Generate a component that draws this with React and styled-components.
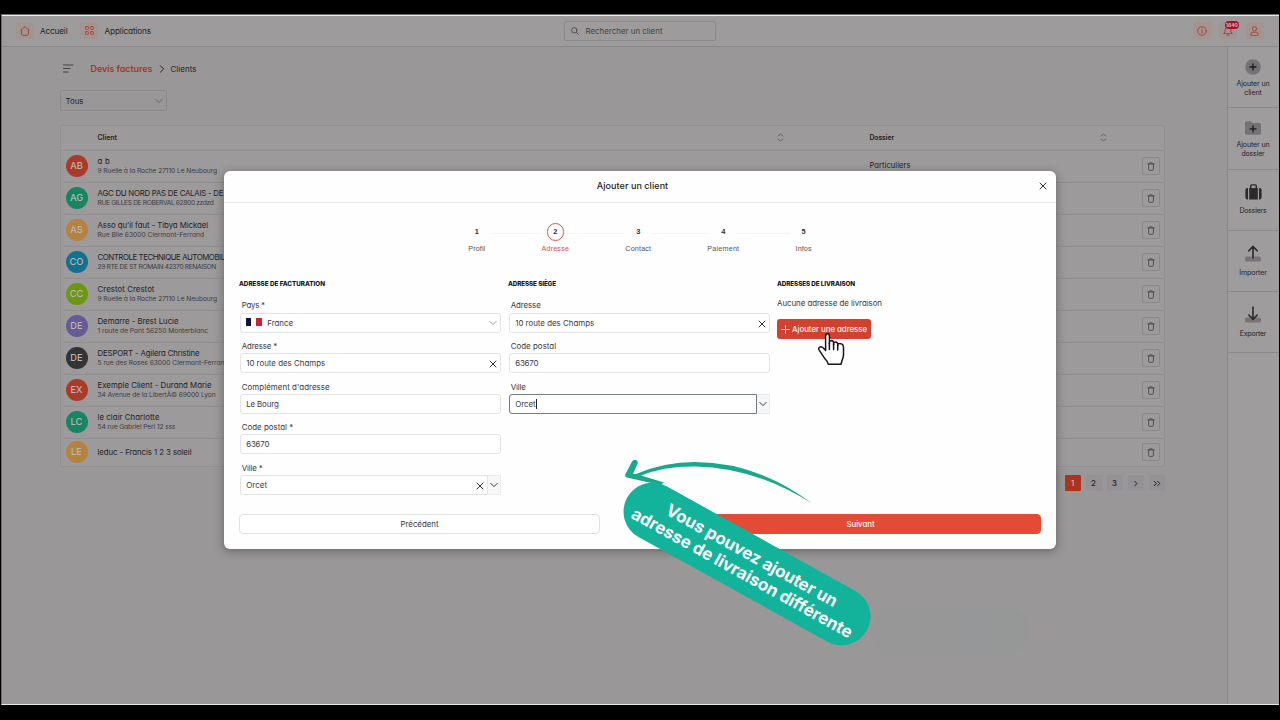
import { useLayoutEffect, useRef } from "react"
import styled, { createGlobalStyle } from "styled-components"

const clients = [
    { initials: "AB", color: "#ac3a28", name: "a b", nameW: 12.5, address: "9 Ruelle à la Roche 27110 Le Neubourg", addressW: 119.5, folder: "Particuliers" },
    { initials: "AG", color: "#168563", name: "AGC DU NORD PAS DE CALAIS - DE CALAIS", nameW: 154, address: "RUE GILLES DE ROBERVAL 62800 zzdzd", addressW: 116 },
    { initials: "AS", color: "#b6823f", name: "Asso qu'il faut - Tibya Mickael", nameW: 110.5, address: "Rue Blie 63000 Clermont-Ferrand", addressW: 106.5 },
    { initials: "CO", color: "#12718c", name: "CONTROLE TECHNIQUE AUTOMOBILE", nameW: 131.5, address: "29 RTE DE ST ROMAIN 42370 RENAISON", addressW: 118.5 },
    { initials: "CC", color: "#6b9712", name: "Crestot Crestot", nameW: 57, address: "9 Ruelle à la Roche 27110 Le Neubourg", addressW: 119.5 },
    { initials: "DE", color: "#665a97", name: "Demarre - Brest Lucie", nameW: 81, address: "1 route de Pont 56250 Monterblanc", addressW: 110.5 },
    { initials: "DE", color: "#343335", name: "DESPORT - Agilera Christine", nameW: 102, address: "5 rue des Roses 63000 Clermont-Ferrand", addressW: 131 },
    { initials: "EX", color: "#ac3a28", name: "Exemple Client - Durand Marie", nameW: 114, address: "34 Avenue de la LibertÃ© 69000 Lyon", addressW: 118 },
    { initials: "LC", color: "#168563", name: "le clair Charlotte", nameW: 62, address: "54 rue Gabriel Peri 12 sss", addressW: 78 },
    { initials: "LE", color: "#b6823f", name: "leduc - Francis 1 2 3 soleil", nameW: 94 },
]

const steps = [
    { label: "Profil", width: 17, cell: 78.5 },
    { label: "Adresse", width: 27.5, cell: 83, active: true },
    { label: "Contact", width: 26, cell: 85 },
    { label: "Paiement", width: 32, cell: 80.3 },
    { label: "Infos", width: 16, cell: 0 },
]

// Spreads the letters so that the text takes exactly w pixels
const Fit = ({ w, children, ...rest }) => {
    const ref = useRef(null)

    useLayoutEffect(() => {
        const el = ref.current
        el.style.letterSpacing = "0px"
        const natural = el.getBoundingClientRect().width
        el.style.letterSpacing = `${(w - natural) / children.length}px`
    }, [w, children])

    return <Text ref={ref} {...rest}>{children}</Text>
}

// Same, measured before the banner's rotation
const BannerLine = ({ w, children }) => {
    const ref = useRef(null)

    useLayoutEffect(() => {
        const el = ref.current
        el.style.letterSpacing = "0px"
        el.style.letterSpacing = `${(w - el.offsetWidth) / children.length}px`
    }, [w, children])

    return <BannerText ref={ref}>{children}</BannerText>
}

const Chevron = ({ size = 8, color = "#8a888a", dir = "down" }) => {
    const d = { down: "M1 3 L5 7 L9 3", right: "M3 1 L7 5 L3 9" }[dir]
    return (
        <Icon width={size} height={size} viewBox="0 0 10 10" stroke={color} strokeWidth="1.2">
            <path d={d} />
        </Icon>
    )
}

const Cross = () => (
    <Icon width="8" height="8" viewBox="0 0 8 8" stroke="#333" strokeWidth="1">
        <path d="M1 1 L7 7 M7 1 L1 7" />
    </Icon>
)

const Sort = () => (
    <Icon width="7" height="9" viewBox="0 0 7 9" stroke="#5a585a" strokeWidth=".8">
        <path d="M1 3 L3.5 1 L6 3 M1 6 L3.5 8 L6 6" />
    </Icon>
)

const Trash = () => (
    <Icon width="8" height="9" viewBox="0 0 8 9" stroke="#434143" strokeWidth=".8">
        <path d="M.9 1.9 H7.1 M2.8 1.7 V.9 H5.2 V1.7 M1.6 2 V7.3 Q1.6 8.4 2.7 8.4 H5.3 Q6.4 8.4 6.4 7.3 V2" />
    </Icon>
)

const TopBar = () => (
    <Header>
        <NavItem>
            <Tile>
                <Icon width="10" height="10" viewBox="0 0 10 10" stroke="#a9412f" strokeWidth=".9">
                    <path d="M.7 4.3 L5 .7 L9.3 4.3 M1.6 3.8 V8.2 Q1.6 9.3 2.6 9.3 H7.4 Q8.4 9.3 8.4 8.2 V3.8" />
                </Icon>
            </Tile>
            <Fit w={27.5} $size="8.2px">Accueil</Fit>
        </NavItem>
        <NavItem>
            <Tile>
                <Icon width="9" height="9" viewBox="0 0 9 9" stroke="#a9412f" strokeWidth=".9">
                    <rect x=".6" y=".6" width="2.8" height="2.8" rx=".6" />
                    <rect x="5.6" y=".6" width="2.8" height="2.8" rx=".6" />
                    <rect x=".6" y="5.6" width="2.8" height="2.8" rx=".6" />
                    <rect x="5.6" y="5.6" width="2.8" height="2.8" rx=".6" />
                </Icon>
            </Tile>
            <Fit w={46.5} $size="8.2px">Applications</Fit>
        </NavItem>
        <Search>
            <Icon width="8" height="8" viewBox="0 0 8 8" stroke="#434143" strokeWidth=".8">
                <circle cx="3.3" cy="3.3" r="2.7" />
                <path d="M5.4 5.4 L7.4 7.4" />
            </Icon>
            <Fit w={77} $size="7.9px" $color="#454345">Rechercher un client</Fit>
        </Search>
        <HeaderIcons>
            <Tile>
                <Icon width="10" height="10" viewBox="0 0 10 10" stroke="#a9412f" strokeWidth=".9">
                    <circle cx="5" cy="5" r="4.3" />
                    <path d="M5 4.6 V7.2 M5 2.8 V3.1" />
                </Icon>
            </Tile>
            <Tile>
                <Icon width="10" height="10" viewBox="0 0 10 10" stroke="#a9412f" strokeWidth=".9">
                    <path d="M.8 7.5 H9.2 L8 5.9 V4 Q8 1 5 1 Q2 1 2 4 V5.9 Z M3.7 9.2 H6.3" />
                </Icon>
                <Badge>1640</Badge>
            </Tile>
            <Tile>
                <Icon width="9" height="10" viewBox="0 0 9 10" stroke="#a9412f" strokeWidth=".9">
                    <circle cx="4.5" cy="2.8" r="2.1" />
                    <path d="M.9 9.3 V8.2 Q.9 6.2 2.9 6.2 H6.1 Q8.1 6.2 8.1 8.2 V9.3 Z" />
                </Icon>
            </Tile>
        </HeaderIcons>
    </Header>
)

const SidePanel = () => (
    <Aside>
        <Action>
            <Icon width="16" height="16" viewBox="0 0 16 16">
                <circle cx="8" cy="8" r="7.8" fill="#747274" />
                <path d="M8 5 V11 M5 8 H11" stroke="#1b1a1c" strokeWidth="1.3" />
            </Icon>
            <Fit w={33} $size="7px" $line="9.4px">Ajouter un</Fit>
            <Fit w={17.5} $size="7px" $line="9.4px">client</Fit>
        </Action>
        <Action>
            <Icon width="16" height="16" viewBox="0 0 16 16">
                <path d="M0 3 Q0 1.2 1.6 1.2 H5.6 L7.4 3 H14.4 Q16 3 16 4.6 V13 Q16 14.8 14.4 14.8 H1.6 Q0 14.8 0 13 Z" fill="#747274" />
                <path d="M8 5.8 V11.8 M5 8.8 H11" stroke="#1b1a1c" strokeWidth="1.3" />
            </Icon>
            <Fit w={33} $size="7px" $line="9.4px">Ajouter un</Fit>
            <Fit w={23} $size="7px" $line="9.4px">dossier</Fit>
        </Action>
        <Action>
            <Icon width="17" height="16" viewBox="0 0 17 16">
                <path d="M2.6 4 H3 V15.4 H2.6 Q.4 15.4 .4 13.4 V6 Q.4 4 2.6 4 Z M14 4 H14.4 Q16.6 4 16.6 6 V13.4 Q16.6 15.4 14.4 15.4 H14 Z M4.2 4 H12.8 V15.4 H4.2 Z" fill="#2b2a2c" />
                <path d="M5.7 4 V2 Q5.7 .9 6.8 .9 H10.2 Q11.3 .9 11.3 2 V4" stroke="#2b2a2c" strokeWidth="1.4" />
            </Icon>
            <Fit w={27} $size="7px" $line="13px">Dossiers</Fit>
        </Action>
        <Action>
            <Icon width="16" height="17" viewBox="0 0 16 17">
                <rect x="0" y="11.5" width="16" height="5" rx="1.5" fill="#777577" />
                <path d="M8 13 V2 M3.8 5.8 L8 1.4 L12.2 5.8" stroke="#2b2a2c" strokeWidth="1.6" />
            </Icon>
            <Fit w={27.5} $size="7px" $line="13px">Importer</Fit>
        </Action>
        <Action>
            <Icon width="16" height="17" viewBox="0 0 16 17">
                <rect x="0" y="11.5" width="16" height="5" rx="1.5" fill="#777577" />
                <path d="M8 1 V13 M3.8 9 L8 13.4 L12.2 9" stroke="#2b2a2c" strokeWidth="1.6" />
            </Icon>
            <Fit w={26.5} $size="7px" $line="13px">Exporter</Fit>
        </Action>
    </Aside>
)

const ClientTable = () => (
    <Table>
        <HeadRow>
            <span />
            <Fit w={19.5} $size="6.9px" $weight="600">Client</Fit>
            <Sort />
            <Fit w={24.5} $size="6.9px" $weight="600">Dossier</Fit>
            <Sort />
        </HeadRow>
        {clients.map((c) => (
            <Row key={c.initials + c.name} $last={!c.address}>
                <Avatar $color={c.color}>{c.initials}</Avatar>
                <ClientInfo>
                    <Fit w={c.nameW} $size="7.8px" $line="11px">{c.name}</Fit>
                    {c.address && <Fit w={c.addressW} $size="6.7px" $line="9.5px" $color="#3f3d40">{c.address}</Fit>}
                </ClientInfo>
                <Folder>{c.folder && <Fit w={41} $size="7.6px">{c.folder}</Fit>}</Folder>
                <IconButton><Trash /></IconButton>
            </Row>
        ))}
    </Table>
)

const Field = ({ label, labelW, children }) => (
    <FieldBox>
        <FieldLabel><Fit w={labelW} $size="7.9px" $color="#39383a">{label}</Fit></FieldLabel>
        {children}
    </FieldBox>
)

const ClientModal = () => (
    <Modal>
        <ModalHeader>
            <span />
            <Fit w={71.5} $size="9px" $color="#222" $weight="500">Ajouter un client</Fit>
            <Close><Cross /></Close>
        </ModalHeader>
        <Stepper>
            {steps.map((s, i) => (
                <Step key={s.label} $cell={s.cell}>
                    <StepNumber $active={s.active}>{i + 1}</StepNumber>
                    <Fit w={s.width} $size="7.2px" $line="10px" $font="'Liberation Sans', Arial, sans-serif" $color={s.active ? "#e0503f" : "#555"}>{s.label}</Fit>
                </Step>
            ))}
        </Stepper>
        <Columns>
            <div>
                <ColumnTitle><Fit w={86} $size="6.3px" $weight="800" $color="#151515">ADRESSE DE FACTURATION</Fit></ColumnTitle>
                <Field label="Pays *" labelW={23}>
                    <Input>
                        <Flag />
                        <Grow><Fit w={26} $size="7.9px" $color="#3b3a3c">France</Fit></Grow>
                        <Chevron color="#999" />
                    </Input>
                </Field>
                <Field label="Adresse *" labelW={35.5}>
                    <Input>
                        <Grow><Fit w={79} $size="7.9px" $color="#3b3a3c">10 route des Champs</Fit></Grow>
                        <Lowered><Cross /></Lowered>
                    </Input>
                </Field>
                <Field label="Complément d'adresse" labelW={88}>
                    <Input><Fit w={32.5} $size="7.9px" $color="#3b3a3c">Le Bourg</Fit></Input>
                </Field>
                <Field label="Code postal *" labelW={51.5}>
                    <Input><Fit w={23} $size="7.9px" $color="#3b3a3c">63670</Fit></Input>
                </Field>
                <Field label="Ville *" labelW={21}>
                    <Split>
                        <Input $joined>
                            <Grow><Fit w={21} $size="7.9px" $color="#3b3a3c">Orcet</Fit></Grow>
                            <Lowered><Cross /></Lowered>
                        </Input>
                        <Toggle><Chevron color="#333" /></Toggle>
                    </Split>
                </Field>
            </div>
            <div>
                <ColumnTitle><Fit w={48} $size="6.3px" $weight="800" $color="#151515">ADRESSE SIÈGE</Fit></ColumnTitle>
                <Field label="Adresse" labelW={30}>
                    <Input>
                        <Grow><Fit w={79} $size="7.9px" $color="#3b3a3c">10 route des Champs</Fit></Grow>
                        <Lowered><Cross /></Lowered>
                    </Input>
                </Field>
                <Field label="Code postal" labelW={45.5}>
                    <Input><Fit w={23} $size="7.9px" $color="#3b3a3c">63670</Fit></Input>
                </Field>
                <Field label="Ville" labelW={15}>
                    <Split>
                        <Input $joined $focused>
                            <Fit w={20.5} $size="7.9px" $color="#3b3a3c">Orcet</Fit>
                            <Caret />
                        </Input>
                        <Toggle><Chevron color="#333" /></Toggle>
                    </Split>
                </Field>
            </div>
            <div>
                <ColumnTitle><Fit w={78} $size="6.3px" $weight="800" $color="#151515">ADRESSES DE LIVRAISON</Fit></ColumnTitle>
                <Empty><Fit w={105} $size="7.9px" $color="#39383a">Aucune adresse de livraison</Fit></Empty>
                <AddButton>
                    <Icon width="9" height="9" viewBox="0 0 9 9" stroke="#fbe9e6" strokeWidth="1">
                        <path d="M4.5 .7 V8.3 M.7 4.5 H8.3" />
                    </Icon>
                    <Fit w={75} $size="7.9px" $weight="500" $color="#fdeeeb">Ajouter une adresse</Fit>
                </AddButton>
            </div>
        </Columns>
        <Footer>
            <WideButton><Fit w={38} $size="7.9px" $color="#39383a">Précédent</Fit></WideButton>
            <WideButton $primary><Fit w={28} $size="7.9px" $weight="500" $color="#fff3f0">Suivant</Fit></WideButton>
        </Footer>
    </Modal>
)

const HandCursor = () => (
    <Cursor width="30" height="36" viewBox="0 0 30 36">
        <path
            d="M9.6 16.5 V4.5 Q9.6 1.8 11.5 1.8 Q13.4 1.8 13.4 4.5 V12 V10.3 Q13.8 8.6 15.5 8.6 Q17.6 8.8 17.6 11 V13 V11.5 Q18 9.8 19.6 9.9 Q21.7 10.1 21.7 12.3 V14 V13 Q22.1 11.4 23.6 11.6 Q27.5 11.8 27.5 15.5 V23 Q27.4 25.5 26.2 28 L25 32.2 H12.2 Q11.6 29.5 8.8 26.6 L3.2 18.2 Q1.8 15.8 4.2 14.9 Q6.2 14.4 9.6 18.6 Z"
            fill="#fff"
            stroke="#16161c"
            strokeWidth="1.5"
            strokeLinejoin="round"
        />
        <path d="M13.4 11 V17.5 M17.6 12 V17.5 M21.7 13 V18" stroke="#16161c" strokeWidth="1.5" fill="none" strokeLinecap="round" />
    </Cursor>
)

const Arrow = () => (
    <ArrowSvg width="200" height="50" viewBox="620 456 200 50">
        <path d="M636 474 Q664 462 695 462 Q757 462.2 812 503.4 Q755 467.4 695 466.4 Q664 466 641 475.6 L664 482.5 L660 485 L627 477.6 Q624.4 476.6 625.4 474.2 L632 461.6 Q633.8 459 636.6 460.2 Q638.6 461.4 637.4 464 L633 474 Z" fill="#16a98b" />
    </ArrowSvg>
)

export default function App() {
    return (
        <>
            <GlobalStyle />
            <Screen>
                <Shell>
                    <TopBar />
                    <Body>
                        <Content>
                            <Breadcrumb>
                                <Icon width="11" height="9" viewBox="0 0 11 9" stroke="#39383a" strokeWidth=".9">
                                    <path d="M.5 1 H10 M.5 4.5 H7.2 M.5 8 H5.2" />
                                </Icon>
                                <Fit w={62} $size="9px" $weight="600" $color="#a5371f">Devis factures</Fit>
                                <Chevron dir="right" color="#1f1e20" />
                                <Fit w={26} $size="7.9px">Clients</Fit>
                            </Breadcrumb>
                            <Filter>
                                <Fit w={18} $size="8px">Tous</Fit>
                                <Chevron color="#656365" />
                            </Filter>
                            <ClientTable />
                            <Pager>
                                <Page>‹</Page>
                                <Page $active>1</Page>
                                <Page>2</Page>
                                <Page>3</Page>
                                <Page>
                                    <Icon width="4" height="7" viewBox="0 0 4 7" stroke="#222" strokeWidth="1"><path d="M.8 1.3 L3 3.5 L.8 5.7" /></Icon>
                                </Page>
                                <Page>
                                    <Icon width="8" height="7" viewBox="0 0 8 7" stroke="#222" strokeWidth="1"><path d="M1.2 1.3 L3.4 3.5 L1.2 5.7 M4.6 1.3 L6.8 3.5 L4.6 5.7" /></Icon>
                                </Page>
                            </Pager>
                        </Content>
                        <SidePanel />
                    </Body>
                </Shell>
                <ClientModal />
                <Ghost />
                <Arrow />
                <Banner>
                    <BannerLine w={193}>Vous pouvez ajouter un</BannerLine>
                    <BannerLine w={250}>adresse de livraison différente</BannerLine>
                </Banner>
                <HandCursor />
            </Screen>
        </>
    )
}

const GlobalStyle = createGlobalStyle`
    * {
        box-sizing: border-box;
    }
    body {
        margin: 0;
        background: #000;
        overflow: hidden;
        font-family: Inter, "Open Sans", sans-serif;
        font-feature-settings: "cv11";
        color: #242325;
    }
`

const Text = styled.span`
    display: inline-block;
    white-space: nowrap;
    flex: none;
    font-family: ${(p) => p.$font || "inherit"};
    font-size: ${(p) => p.$size};
    font-weight: ${(p) => p.$weight || 400};
    line-height: ${(p) => p.$line || "12px"};
    color: ${(p) => p.$color || "#242325"};
`

const Icon = styled.svg`
    display: block;
    flex: none;
    fill: none;
    stroke-linecap: round;
    stroke-linejoin: round;
`

const Screen = styled.div`
    position: relative;
    width: 1280px;
    height: 720px;
    padding: 14px 1.5px 15px 1px;
`

const Shell = styled.div`
    height: 691px;
    display: flex;
    flex-direction: column;
    background: #999798;
    border-left: 1px solid #6b696b;
    border-top: 1px solid #6d6b6d;
    border-bottom: 1px solid #e8e8e8;
`

const Header = styled.header`
    height: 32px;
    flex: none;
    display: flex;
    align-items: center;
    padding: 0 15px 1px 13.5px;
    border-top: 1px solid #ececec;
    border-bottom: 1px solid #8a888a;
    background: #9d9b9c;
`

const NavItem = styled.div`
    display: flex;
    align-items: center;
    gap: 6.5px;
    margin-right: 12.5px;
`

const Tile = styled.div`
    position: relative;
    width: 18px;
    height: 17px;
    border-radius: 3px;
    background: #a29491;
    display: flex;
    justify-content: center;
    align-items: center;
`

const Badge = styled.div`
    position: absolute;
    left: 5.5px;
    top: -1px;
    width: 14px;
    height: 8px;
    border-radius: 4px;
    background: #a31327;
    color: #d8b9bd;
    font-size: 5px;
    font-weight: 700;
    line-height: 8px;
    text-align: center;
`

const Search = styled.div`
    width: 152px;
    height: 20px;
    margin-left: 400px;
    padding: 0 6.5px;
    display: flex;
    align-items: center;
    gap: 6.5px;
    border: 1px solid #8b898b;
    border-radius: 2px;
`

const HeaderIcons = styled.div`
    margin-left: auto;
    display: flex;
    gap: 8.2px;
`

const Body = styled.div`
    flex: 1;
    display: flex;
`

const Content = styled.main`
    width: 1163px;
    padding: 13.5px 0 0 58px;
`

const Breadcrumb = styled.nav`
    height: 16px;
    display: flex;
    align-items: center;
    padding-left: 3px;

    svg:first-child {
        margin-right: 16.5px;
    }
    svg:not(:first-child) {
        margin: 0 5px;
    }
`

const Filter = styled.div`
    width: 107px;
    height: 21px;
    margin-top: 13.5px;
    padding: 0 3px 0 4.5px;
    display: flex;
    align-items: center;
    justify-content: space-between;
    border: 1px solid #8b898b;
    border-radius: 2px;
`

const Table = styled.section`
    width: 1105px;
    margin-top: 14px;
    border: 1px solid #929092;
    border-radius: 3px;
    background: #9c9a9b;
`

const HeadRow = styled.div`
    height: 24.5px;
    display: grid;
    grid-template-columns: 36.5px 679px 93px 230.5px auto;
    align-items: center;
    justify-items: start;
    border-bottom: 1px solid #919091;
`

const Row = styled.div`
    height: ${(p) => (p.$last ? "27px" : "32px")};
    margin-left: 3px;
    padding: 0 4px 0 1.5px;
    display: grid;
    grid-template-columns: 32px 772px 1fr 18px;
    align-items: center;
    border-bottom: ${(p) => (p.$last ? "none" : "1px solid #919091")};
`

const Avatar = styled.div`
    width: 22px;
    height: 22px;
    border-radius: 50%;
    background: ${(p) => p.$color};
    color: #bab6b6;
    font-size: 9.3px;
    font-weight: 500;
    line-height: 22px;
    text-align: center;
`

const ClientInfo = styled.div`
    display: flex;
    flex-direction: column;
    align-items: flex-start;
`

const Folder = styled.div`
    display: flex;
`

const IconButton = styled.div`
    width: 18px;
    height: 18px;
    display: flex;
    justify-content: center;
    align-items: center;
    border: 1px solid #8a888a;
    border-radius: 2px;
`

const Pager = styled.div`
    display: flex;
    justify-content: flex-end;
    gap: 5px;
    padding: 8.5px 0.5px 0 0;
`

const Page = styled.div`
    width: 16px;
    height: 16px;
    display: flex;
    justify-content: center;
    align-items: center;
    border-radius: 1px;
    font-size: 7.8px;
    font-weight: 500;
    background: ${(p) => (p.$active ? "#ac341d" : "#949294")};
    color: ${(p) => (p.$active ? "#d0c4c2" : "#222")};
`

const Aside = styled.aside`
    width: 52px;
    margin-left: auto;
    border-left: 1px solid #8a888a;
    background: #9e9c9d;
`

const Action = styled.div`
    height: 61.3px;
    display: flex;
    flex-direction: column;
    align-items: center;
    justify-content: center;
    padding-top: 2px;
    border-bottom: 1px solid #8a888a;

    svg {
        margin-bottom: 4px;
    }
`

const Modal = styled.div`
    position: absolute;
    left: 224px;
    top: 170.5px;
    width: 832px;
    height: 378px;
    border-radius: 6px;
    background: #fefefe;
    box-shadow: 0 2px 10px rgba(40, 38, 40, 0.45);
`

const ModalHeader = styled.div`
    height: 32px;
    display: grid;
    grid-template-columns: 25px 1fr 40px;
    align-items: center;
    justify-items: center;
    padding-bottom: 1px;
    border-bottom: 1px solid #e6e6e6;
`

const Close = styled.div`
    padding-left: 13px;
`

const Stepper = styled.div`
    width: 327px;
    margin: 20.7px 0 0 252.8px;
    display: flex;
`

const Step = styled.div`
    position: relative;
    width: 0;
    margin-right: ${(p) => p.$cell}px;
    display: flex;
    flex-direction: column;
    align-items: center;
    gap: 3.5px;

    &:not(:last-child)::after {
        content: "";
        position: absolute;
        left: 14px;
        top: 9.5px;
        width: ${(p) => p.$cell - 28}px;
        height: 1px;
        background: #f5f5f5;
    }
`

const StepNumber = styled.div`
    width: 17.5px;
    height: 17.5px;
    flex: none;
    display: flex;
    justify-content: center;
    align-items: center;
    border: 1px solid ${(p) => (p.$active ? "#cf5a50" : "transparent")};
    border-radius: 50%;
    font-family: "Liberation Sans", Arial, sans-serif;
    font-size: 7.4px;
    font-weight: 700;
    color: #333;
`

const Columns = styled.div`
    height: 235.8px;
    margin-top: 24.3px;
    padding-left: 15px;
    display: grid;
    grid-template-columns: 269px 269px 1fr;
`

const ColumnTitle = styled.div`
    height: 20px;
    line-height: 0;
`

const FieldBox = styled.div`
    width: 261px;
    height: 40.6px;
    margin-left: 1.2px;
`

const FieldLabel = styled.div`
    height: 14.2px;
    padding: 1px 0 0 1.5px;
    line-height: 0;
`

const Input = styled.div`
    flex: 1;
    height: 20px;
    padding: 0 3px 0 5px;
    display: flex;
    align-items: center;
    border: 1px solid ${(p) => (p.$focused ? "#737b85" : "#e4e4e4")};
    border-radius: ${(p) => (p.$joined ? "3px 0 0 3px" : "3px")};
    background: #fff;
`

const Grow = styled.div`
    flex: 1;
    display: flex;
`

const Lowered = styled.div`
    padding-top: 2px;
`

const Flag = styled.div`
    width: 16px;
    height: 8px;
    margin: -1px 5px 0 0;
    background: linear-gradient(90deg, #0d1440 0 5.5px, #fff 5.5px 10.5px, #ce1f37 10.5px);
`

const Caret = styled.div`
    width: 1px;
    height: 10px;
    background: #222;
`

const Split = styled.div`
    display: flex;
`

const Toggle = styled.div`
    width: 13.5px;
    height: 20px;
    display: flex;
    justify-content: center;
    align-items: center;
    border: 1px solid #ececee;
    border-left: none;
    background: #f7f7f8;
`

const Empty = styled.div`
    margin-top: -1px;
    height: 22px;
    line-height: 0;
`

const AddButton = styled.div`
    width: 94px;
    height: 19.5px;
    display: flex;
    align-items: center;
    padding-left: 3.5px;
    gap: 2.5px;
    border-radius: 3px;
    background: #d0422f;
`

const Footer = styled.div`
    display: flex;
    justify-content: space-between;
    padding: 0 15px;
`

const WideButton = styled.div`
    width: 361px;
    height: 19.5px;
    display: flex;
    justify-content: center;
    align-items: center;
    border: 1px solid ${(p) => (p.$primary ? "#e44b37" : "#e0e0e0")};
    border-radius: 4px;
    background: ${(p) => (p.$primary ? "#e44b37" : "#fff")};
`

const Cursor = styled.svg`
    position: absolute;
    left: 815.5px;
    top: 332px;
`

const ArrowSvg = styled.svg`
    position: absolute;
    left: 620px;
    top: 456px;
`

const Banner = styled.div`
    position: absolute;
    left: 610.2px;
    top: 534.5px;
    width: 274px;
    height: 58px;
    display: flex;
    flex-direction: column;
    align-items: center;
    justify-content: center;
    border-radius: 29px;
    background: #12b39a;
    transform: rotate(29deg);
`

const BannerText = styled.div`
    flex: none;
    white-space: nowrap;
    font-size: 17px;
    font-weight: 700;
    line-height: 20.5px;
    color: #fff;
    font-feature-settings: normal;
`

const Ghost = styled.div`
    position: absolute;
    left: 872px;
    top: 606px;
    width: 156px;
    height: 50px;
    border-radius: 24px;
    background: linear-gradient(90deg, rgba(120, 155, 150, 0.02), rgba(120, 155, 150, 0.1));
`
